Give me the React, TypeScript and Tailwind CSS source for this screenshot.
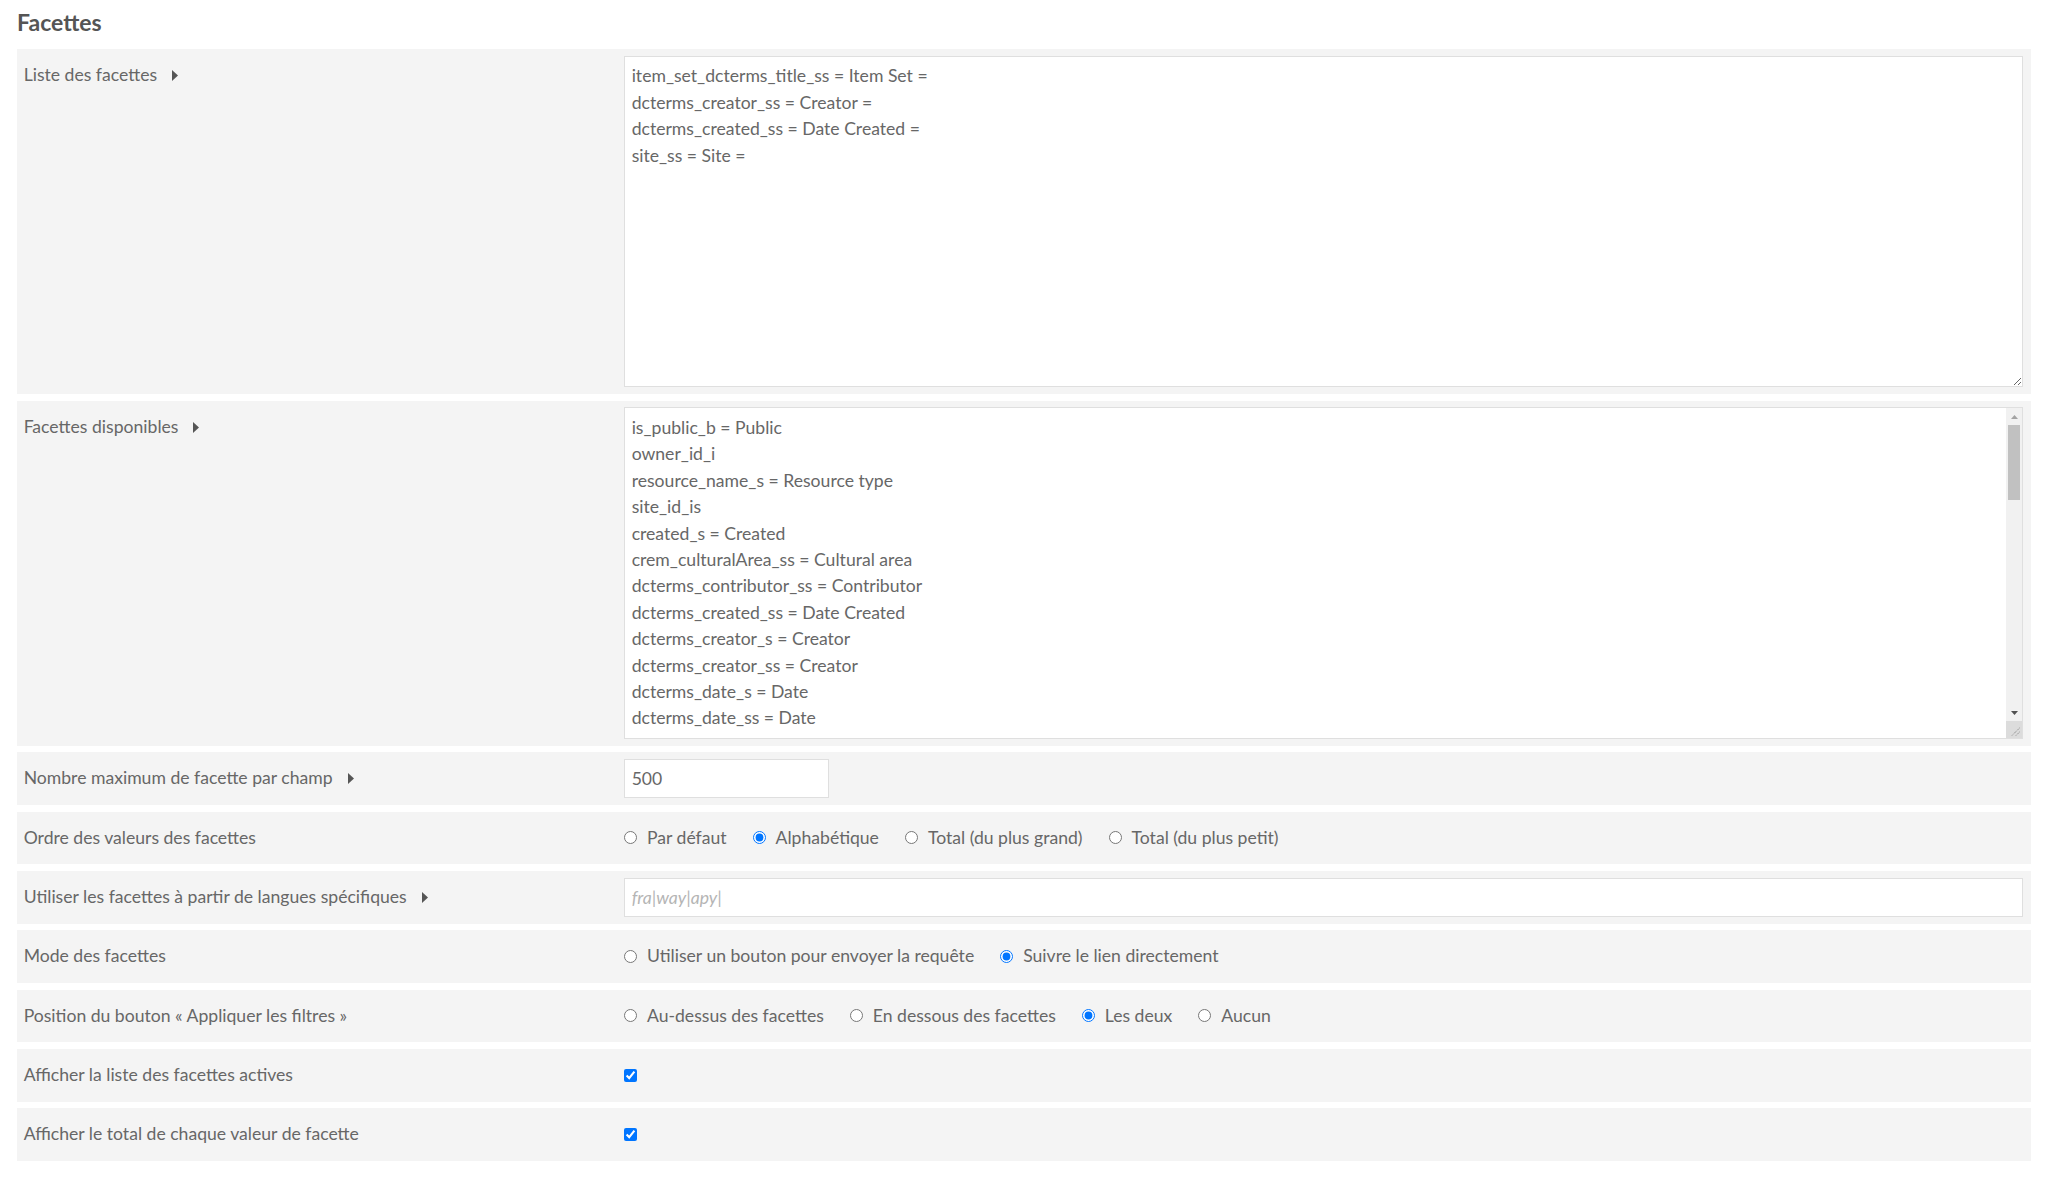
import React from "react";

const listeFacettes = [
    "item_set_dcterms_title_ss = Item Set =",
    "dcterms_creator_ss = Creator =",
    "dcterms_created_ss = Date Created =",
    "site_ss = Site =",
].join("\n");

const facettesDisponibles = [
    "is_public_b = Public",
    "owner_id_i",
    "resource_name_s = Resource type",
    "site_id_is",
    "created_s = Created",
    "crem_culturalArea_ss = Cultural area",
    "dcterms_contributor_ss = Contributor",
    "dcterms_created_ss = Date Created",
    "dcterms_creator_s = Creator",
    "dcterms_creator_ss = Creator",
    "dcterms_date_s = Date",
    "dcterms_date_ss = Date",
    "dcterms_description_s = Description",
    "dcterms_description_ss = Description",
    "dcterms_extent_ss = Extent",
    "dcterms_format_ss = Format",
    "dcterms_identifier_s = Identifier",
    "dcterms_identifier_ss = Identifier",
    "dcterms_isPartOf_ss = Is Part Of",
    "dcterms_language_ss = Language",
    "dcterms_medium_ss = Medium",
    "dcterms_provenance_ss = Provenance",
    "dcterms_publisher_ss = Publisher",
    "dcterms_relation_ss = Relation",
    "dcterms_rights_ss = Rights",
    "dcterms_source_ss = Source",
    "dcterms_spatial_ss = Spatial Coverage",
    "dcterms_subject_ss = Subject",
    "dcterms_title_s = Title",
    "dcterms_title_ss = Title",
    "dcterms_type_ss = Type",
    "item_set_id_is = Item set",
    "media_type_ss = Media type",
    "modified_s = Modified",
    "resource_class_s = Class",
    "resource_template_s = Template",
    "site_ss = Site",
    "title_s = Title",
].join("\n");

function Arrow() {
    return (
        <svg width="6" height="11" viewBox="0 0 6 11" className="ml-[15px] inline-block">
            <polygon points="0,0 6,5.5 0,11" fill="#555555" />
        </svg>
    );
}

function Label({ text, arrow }: { text: string; arrow?: boolean }) {
    return (
        <div className="flex items-center">
            <span>{text}</span>
            {arrow && <Arrow />}
        </div>
    );
}

function Radio({ name, label, checked }: { name: string; label: string; checked?: boolean }) {
    return (
        <label className="mr-[26px] flex items-center gap-[10px]">
            <input type="radio" name={name} defaultChecked={checked} className="m-0 h-[13px] w-[13px]" />
            <span>{label}</span>
        </label>
    );
}

function SimpleRow({ label, arrow, children }: { label: string; arrow?: boolean; children: React.ReactNode }) {
    return (
        <div className="flex h-[52.67px] items-center bg-[#f4f4f4] pl-[6.67px] pr-[8px]">
            <div className="w-[600.33px] shrink-0">
                <Label text={label} arrow={arrow} />
            </div>
            <div className="flex flex-1 items-center">{children}</div>
        </div>
    );
}

// barre de défilement dessinée (le navigateur headless n'en affiche pas)
function Scrollbar() {
    return (
        <div className="flex w-[16px] shrink-0 flex-col bg-[#f1f1f1]">
            <div className="flex h-[17px] items-center justify-center">
                <svg width="7" height="4" viewBox="0 0 7 4">
                    <polygon points="0,4 3.5,0 7,4" fill="#a3a3a3" />
                </svg>
            </div>
            <div className="mx-[2px] h-[75px] bg-[#c1c1c1]" />
            <div className="flex-1" />
            <div className="flex h-[17px] items-center justify-center">
                <svg width="7" height="4" viewBox="0 0 7 4">
                    <polygon points="0,0 7,0 3.5,4" fill="#505050" />
                </svg>
            </div>
            <div className="flex h-[17px] items-end justify-end bg-[#dcdcdc] p-[2px]">
                <svg width="10" height="10" viewBox="0 0 10 10">
                    <line x1="9.5" y1="2" x2="2" y2="9.5" stroke="#777" strokeWidth="1" strokeDasharray="1 1" />
                    <line x1="9.5" y1="6" x2="6" y2="9.5" stroke="#777" strokeWidth="1" strokeDasharray="1 1" />
                </svg>
            </div>
        </div>
    );
}

function TextareaRow({ label, value, scroll }: { label: string; value: string; scroll?: boolean }) {
    return (
        <div className="flex h-[345px] bg-[#f4f4f4] p-[6.67px] pr-[8px]">
            <div className="w-[600.33px] shrink-0 pt-[6.5px]">
                <Label text={label} arrow />
            </div>
            {scroll ? (
                <div className="flex h-full flex-1 border border-[#dfdfdf] bg-white">
                    <textarea
                        readOnly
                        defaultValue={value}
                        className="h-full flex-1 resize-none overflow-hidden bg-white p-[6.67px] text-[#676767] outline-none"
                    />
                    <Scrollbar />
                </div>
            ) : (
                <textarea
                    readOnly
                    defaultValue={value}
                    className="h-full flex-1 border border-[#dfdfdf] bg-white p-[6.67px] text-[#676767] outline-none"
                />
            )}
        </div>
    );
}

export default function App() {
    return (
        <div className="min-h-screen bg-white px-[17px] font-['Lato',sans-serif] text-[17.6px] leading-[26.4px] text-[#676767]">
            <h2 className="h-[49px] pt-[7px] text-[23px] font-bold leading-[30px] text-[#555555]">Facettes</h2>

            <div className="flex flex-col gap-[6.67px]">
                <TextareaRow label="Liste des facettes" value={listeFacettes} />
                <TextareaRow label="Facettes disponibles" value={facettesDisponibles} scroll />

                <SimpleRow label="Nombre maximum de facette par champ" arrow>
                    <input
                        type="text"
                        defaultValue="500"
                        className="h-[39.33px] w-[205px] border border-[#dfdfdf] bg-white px-[6.67px] text-[#676767] outline-none"
                    />
                </SimpleRow>

                <SimpleRow label="Ordre des valeurs des facettes">
                    <Radio name="order" label="Par défaut" />
                    <Radio name="order" label="Alphabétique" checked />
                    <Radio name="order" label="Total (du plus grand)" />
                    <Radio name="order" label="Total (du plus petit)" />
                </SimpleRow>

                <SimpleRow label="Utiliser les facettes à partir de langues spécifiques" arrow>
                    <input
                        type="text"
                        placeholder="fra|way|apy|"
                        className="h-[39.33px] w-full border border-[#dfdfdf] bg-white px-[6.67px] text-[#676767] outline-none placeholder:italic placeholder:text-[#b5b5b5]"
                    />
                </SimpleRow>

                <SimpleRow label="Mode des facettes">
                    <Radio name="mode" label="Utiliser un bouton pour envoyer la requête" />
                    <Radio name="mode" label="Suivre le lien directement" checked />
                </SimpleRow>

                <SimpleRow label="Position du bouton « Appliquer les filtres »">
                    <Radio name="position" label="Au-dessus des facettes" />
                    <Radio name="position" label="En dessous des facettes" />
                    <Radio name="position" label="Les deux" checked />
                    <Radio name="position" label="Aucun" />
                </SimpleRow>

                <SimpleRow label="Afficher la liste des facettes actives">
                    <input type="checkbox" defaultChecked className="m-0 h-[13px] w-[13px]" />
                </SimpleRow>

                <SimpleRow label="Afficher le total de chaque valeur de facette">
                    <input type="checkbox" defaultChecked className="m-0 h-[13px] w-[13px]" />
                </SimpleRow>
            </div>
        </div>
    );
}
